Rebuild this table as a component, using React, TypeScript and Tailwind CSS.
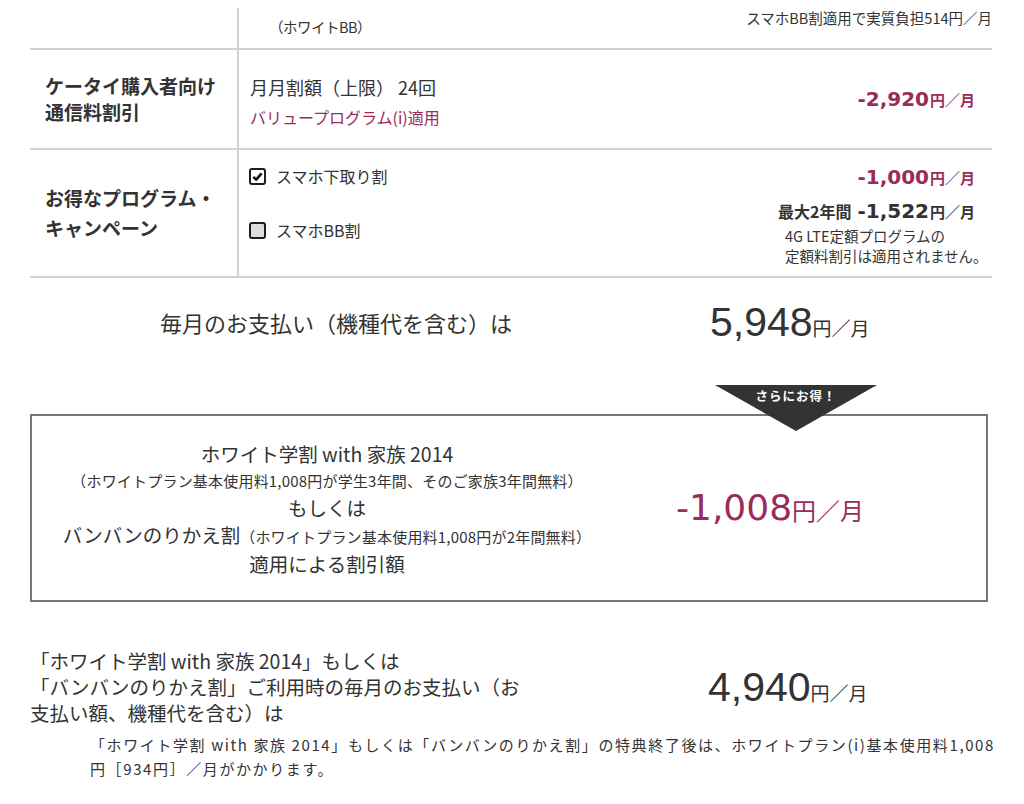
import React from "react";

const jp = "font-['Noto_Sans_CJK_JP',sans-serif]";
const berry = "text-[#9a2c59]";

function Checkbox({ checked }: { checked?: boolean }) {
  return (
    <span
      className={`w-[17px] h-[17px] rounded-[3px] border-2 border-[#1e1e1e] flex items-center justify-center ${
        checked ? "bg-white" : "bg-[#dedede]"
      }`}
    >
      {checked && (
        <svg viewBox="0 0 12 12" className="w-[11px] h-[11px]">
          <path d="M1.5 6.5 L4.5 9.5 L10.5 2.5" fill="none" stroke="#111" strokeWidth="2.8" strokeLinejoin="round" />
        </svg>
      )}
    </span>
  );
}

function SmallPrice({ value, color }: { value: string; color: string }) {
  return (
    <span className={`flex items-baseline font-bold ${color}`}>
      <span className="font-['DejaVu_Sans',sans-serif] text-[20px] leading-[26px]">{value}</span>
      <span className="text-[15px] ml-[1px]">円／月</span>
    </span>
  );
}

function BigPrice({ value, dejavu, color = "text-[#333]" }: { value: string; dejavu?: boolean; color?: string }) {
  return (
    <span className={`flex items-baseline ${color}`}>
      <span
        className={
          dejavu
            ? "font-['DejaVu_Sans',sans-serif] text-[36px] leading-[44px]"
            : "font-['Liberation_Sans',sans-serif] text-[41px] leading-[44px]"
        }
      >
        {value}
      </span>
      <span className={dejavu ? "text-[24px]" : "text-[19px]"}>円／月</span>
    </span>
  );
}

export default function App() {
  return (
    <div className={`${jp} text-[#333] bg-white w-[1024px] h-[804px] pl-[30px] pr-[32px] overflow-hidden`}>
      {/* plan table */}
      <div>
        <div className="flex mt-[8px] h-[42px] border-b-2 border-[#d3d3d3]">
          <div className="w-[207px]" />
          <div className="flex-1 border-l-2 border-[#d3d3d3] flex justify-between">
            <span className="pl-[30px] pt-[9px] text-[14.5px] leading-[20px] tracking-[-0.5px]">（ホワイトBB）</span>
            <span className="text-[14.5px] leading-[20px]">スマホBB割適用で実質負担514円／月</span>
          </div>
        </div>

        <div className="flex h-[100px] border-b-2 border-[#d3d3d3]">
          <div className="w-[207px] pl-[15px] flex items-center font-bold text-[19px] leading-[26px]">
            <div>
              ケータイ購入者向け
              <br />
              通信料割引
            </div>
          </div>
          <div className="flex-1 border-l-2 border-[#d3d3d3] flex justify-between">
            <div className="pl-[11px] pt-[24px]">
              <div className="text-[18px] leading-[26px]">月月割額（上限） 24回</div>
              <div className={`text-[16px] leading-[24px] mt-[5px] ${berry}`}>バリュープログラム(i)適用</div>
            </div>
            <div className="flex items-center pr-[17px]">
              <SmallPrice value="-2,920" color={berry} />
            </div>
          </div>
        </div>

        <div className="flex h-[128px] border-b-2 border-[#d3d3d3]">
          <div className="w-[207px] pl-[15px] flex items-center font-bold text-[19px] leading-[30px]">
            <div>
              お得なプログラム・
              <br />
              キャンペーン
            </div>
          </div>
          <div className="flex-1 border-l-2 border-[#d3d3d3] flex justify-between">
            <div className="pl-[10px] pt-[14px] text-[16px]">
              <label className="flex items-center gap-[10px] h-[24px]">
                <Checkbox checked />
                スマホ下取り割
              </label>
              <label className="flex items-center gap-[10px] h-[24px] mt-[30px]">
                <Checkbox />
                スマホBB割
              </label>
            </div>
            <div className="pt-[14px] pr-[8px] flex flex-col items-end">
              <div className="pr-[9px]">
                <SmallPrice value="-1,000" color={berry} />
              </div>
              <div className="pr-[9px] mt-[8px] flex items-baseline gap-[6px]">
                <span className="font-bold text-[16px]">最大2年間</span>
                <SmallPrice value="-1,522" color="text-[#333]" />
              </div>
              <div className="text-[14.5px] leading-[20px] mt-[2px] w-[199px] whitespace-nowrap">
                4G LTE定額プログラムの
                <br />
                定額料割引は適用されません。
              </div>
            </div>
          </div>
        </div>
      </div>

      {/* monthly total */}
      <div className="flex items-center h-[88px]">
        <div className="w-[680px] pl-[130px] text-[22px]">毎月のお支払い（機種代を含む）は</div>
        <BigPrice value="5,948" />
      </div>

      {/* discount box */}
      <div className="relative mt-[48px] mr-[4px] h-[188px] border-2 border-[#777] flex items-center">
        <div className="absolute left-[683px] top-[-31px] w-[162px] h-[46px]">
          <svg viewBox="0 0 162 46" className="absolute inset-0 w-[162px] h-[46px]">
            <polygon points="0,0 162,0 81,46" fill="#333" />
          </svg>
          <span className="absolute left-0 right-0 top-[2px] text-center text-white font-bold text-[12.5px] leading-[18px] tracking-[1px]">
            さらにお得！
          </span>
        </div>
        <div className="w-[590px] flex flex-col items-center text-center text-[19.5px] leading-[27px] whitespace-nowrap">
          <div>ホワイト学割 with 家族 2014</div>
          <div className="text-[15px] tracking-[0.2px]">（ホワイトプラン基本使用料1,008円が学生3年間、そのご家族3年間無料）</div>
          <div>もしくは</div>
          <div>
            バンバンのりかえ割
            <span className="text-[15px] tracking-[0.2px]">（ホワイトプラン基本使用料1,008円が2年間無料）</span>
          </div>
          <div>適用による割引額</div>
        </div>
        <div className="ml-[54px]">
          <BigPrice value="-1,008" dejavu color={berry} />
        </div>
      </div>

      {/* after discount */}
      <div className="flex items-center mt-[46px]">
        <div className="w-[678px] text-[19.5px] leading-[26px] whitespace-nowrap">
          「ホワイト学割 with 家族 2014」もしくは
          <br />
          「バンバンのりかえ割」ご利用時の毎月のお支払い（お
          <br />
          支払い額、機種代を含む）は
        </div>
        <BigPrice value="4,940" />
      </div>

      <p className="pl-[60px] mt-[7px] text-[15px] leading-[24px] whitespace-nowrap tracking-[1.6px]">
        「ホワイト学割 with 家族 2014」もしくは「バンバンのりかえ割」の特典終了後は、ホワイトプラン(i)基本使用料1,008
        <br />
        円［934円］／月がかかります。
      </p>
    </div>
  );
}
